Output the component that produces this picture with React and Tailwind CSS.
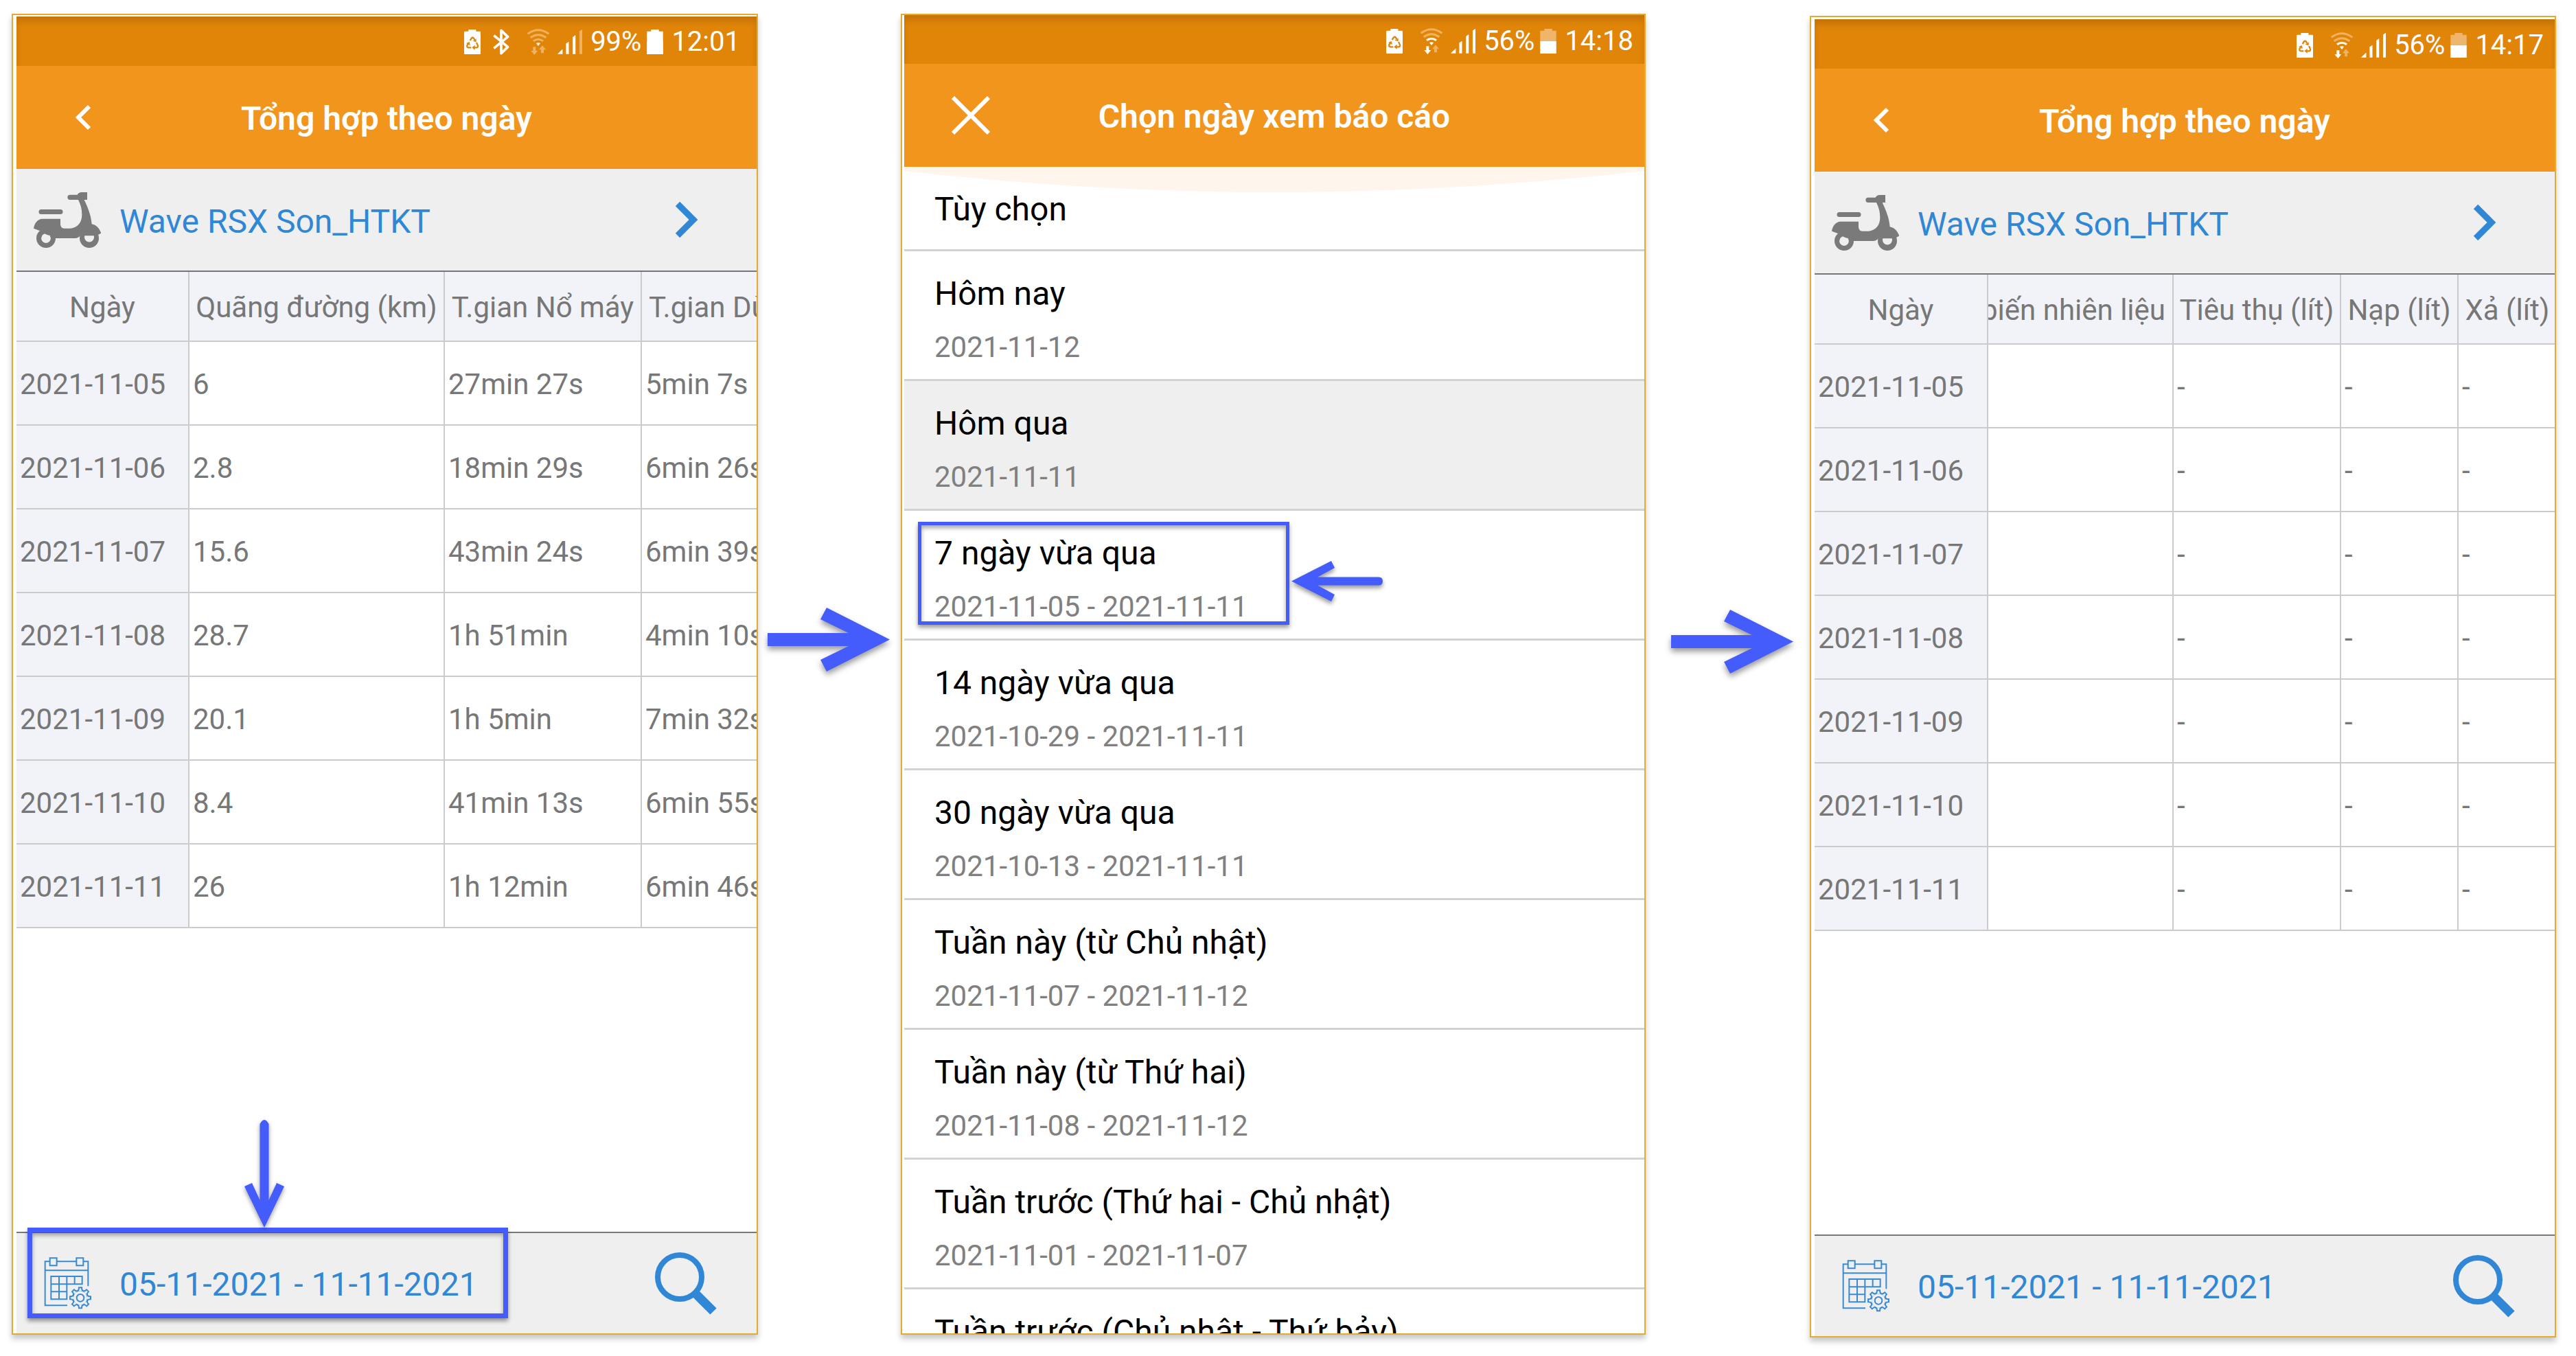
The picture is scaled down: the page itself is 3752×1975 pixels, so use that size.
import React from "react";

function BatterySaverIcon() {
  return (
    <svg className="h-9 w-6" viewBox="33 36 72 108" aria-hidden="true">
      <path fill="#fff" d="M52 36h33v8h16q4 0 4 4v92q0 4-4 4H37q-4 0-4-4V48q0-4 4-4h15z" />
      <path
        d="M59 84L66 73Q70 69 74 73L79 81M87 93L93 106Q95 114 87 115H77M64 115H52Q44 114 46 106L51 98"
        fill="none"
        stroke="#e18509"
        strokeWidth="7"
      />
      <path fill="#e18509" d="M86 76v15l-15-5zM80 104v21l-13-10zM42 96l14-6 4 15z" />
    </svg>
  );
}

function BluetoothIcon() {
  return (
    <svg className="h-[38px] w-6" viewBox="157 33 72 114" aria-hidden="true">
      <path
        d="M161 62L222 112L193 140V40L222 68L161 118"
        fill="none"
        stroke="#fff"
        strokeWidth="11"
        strokeLinejoin="round"
      />
    </svg>
  );
}

function WifiIcon({ strong }) {
  const dim = "#f0b25f";
  const lit = strong ? "#fff" : dim;
  return (
    <svg className="h-[38px] w-8" viewBox="304 32 96 114" aria-hidden="true">
      <g fill="none" strokeWidth="9">
        <path d="M306 54Q352 20 398 54" stroke={dim} />
        <path d="M318 70Q352 46 386 70" stroke={dim} />
        <path d="M331 85Q352 70 373 85" stroke={lit} />
      </g>
      <path d="M343 95q9-5 18 0l-9 12z" fill="#fff" />
      <path d="M329 111h12v17h9l-15 18-15-18h9z" fill={lit} />
      <path d="M364 138h12v-15h9l-15-18-15 18h9z" fill={dim} />
    </svg>
  );
}

function SignalIcon({ full }) {
  return (
    <svg className="h-9 w-9" viewBox="440 38 107 106" aria-hidden="true">
      <path fill="#fff" d="M440 144l22-22v22zM477 98l12-8v54h-12zM506 70l12-9v83h-12z" />
      <path fill={full ? "#fff" : "#f0b25f"} d="M535 45l12-8v107h-12z" />
    </svg>
  );
}

function BatteryIcon({ half }) {
  return (
    <svg className="h-9 w-6" viewBox="831 36 70 108" aria-hidden="true">
      <path fill={half ? "#efb56b" : "#fff"} d="M849 36h34v8h18v100h-70V44h18z" />
      <path fill="#fff" d="M831 90h70v54h-70z" />
    </svg>
  );
}

function ScooterIcon() {
  return (
    <svg className="h-[81px] w-[98px]" viewBox="27 39 294 243" fill="#7b7a7a" aria-hidden="true">
      <path d="M60 114h84a10 10 0 0 1 0 21H60a10 10 0 0 1 0-21z" />
      <path d="M186 50h32q6-11 18-11h25v33h-13c16 34 30 68 33 106c20 4 34 20 41 40l-12 6q-6-1-8 4H231c-4 7-12 12-24 12h-88q-4-18-22-26-24-10-44-7L27 197c3-22 18-42 38-42h79v25q2 17 16 17h28c30-4 50-24 50-60q0-34-16-65h-36a11 11 0 0 1 0-22z" />
      <circle cx="81" cy="240" r="31" fill="none" stroke="#7b7a7a" strokeWidth="22" />
      <circle cx="81" cy="240" r="20" fill="#efefef" />
      <circle cx="270" cy="240" r="42" />
      <path fill="#efefef" d="M250 229h40a21 21 0 1 1-40 0z" />
      <path d="M74 219h26l-4 9-12-4z" />
    </svg>
  );
}

function CalendarIcon() {
  const teeth = [0, 45, 90, 135, 180, 225, 270, 315];
  return (
    <svg className="h-[76px] w-[70px]" viewBox="26 31 210 228" fill="none" stroke="#3a8ad2" strokeWidth="6" aria-hidden="true">
      <path d="M52 50H31V242H128M83 50H167M199 50H219V158M31 89H219" />
      <path d="M52 35h30v33H52zM168 35h30v33h-30z" />
      <path d="M57 115H193V149H57zM57 149V215H126V115M92 115V215M160 115V149M57 182H126" />
      <circle cx="185" cy="209" r="16" strokeWidth="6" />
      <circle cx="185" cy="209" r="33" strokeWidth="6" />
      {teeth.map((a) => (
        <path key={a} transform={`rotate(${a} 185 209)`} fill="#efefef" strokeWidth="6" d="M173 179Q179 176 179 164H191Q191 176 197 179" />
      ))}
    </svg>
  );
}

function SearchIcon() {
  return (
    <svg className="h-[92px] w-[92px]" viewBox="0 0 92 92" fill="none" stroke="#2f87d6" aria-hidden="true">
      <circle cx="37" cy="37" r="32" strokeWidth="8" />
      <path d="M60 61L86 87" strokeWidth="13" />
    </svg>
  );
}

function StatusBar({ percent, time, bluetooth, half, className }) {
  return (
    <div className={`flex items-center justify-end bg-[#e18509] text-[40px] leading-[48px] text-white shadow-[inset_0_8px_8px_rgba(0,0,0,0.12)] ${className}`}>
      <BatterySaverIcon />
      {bluetooth && (
        <span className="ml-[18px]">
          <BluetoothIcon />
        </span>
      )}
      <span className="ml-[26px]">
        <WifiIcon strong={half} />
      </span>
      <span className="ml-3">
        <SignalIcon full={half} />
      </span>
      <span className="ml-3">{percent}</span>
      <span className="ml-2">
        <BatteryIcon half={half} />
      </span>
      <span className="ml-3">{time}</span>
    </div>
  );
}

function TitleBar({ title, close }) {
  return (
    <header className="grid h-[150px] grid-cols-[168px_1fr_168px] items-center bg-[#f2951d]">
      {close ? (
        <button type="button" aria-label="Đóng" className="ml-[69px] w-[56px]">
          <svg className="h-14 w-14" viewBox="0 0 56 56" aria-hidden="true">
            <path d="M2 2L54 54M54 2L2 54" stroke="#fff" strokeWidth="6" />
          </svg>
        </button>
      ) : (
        <button type="button" aria-label="Quay lại" className="ml-[85px] w-6">
          <svg className="h-[38px] w-6" viewBox="0 0 24 38" aria-hidden="true">
            <path d="M21 3L5 19L21 35" fill="none" stroke="#fff" strokeWidth="6" />
          </svg>
        </button>
      )}
      <h1 className="pt-1 text-center text-[48px] leading-[56px] font-semibold whitespace-nowrap text-white">{title}</h1>
    </header>
  );
}

const CELL = "overflow-hidden border-r-2 border-b-2 border-[#cbcbcd] whitespace-nowrap";

function ReportTable({ columns, rows, width }) {
  return (
    <div className="overflow-hidden">
      <table className={`table-fixed border-separate border-spacing-0 text-left text-[42px] leading-[48px] text-[#777] ${width}`}>
        <thead>
          <tr className="h-[102px] bg-[#f2f3f8]">
            {columns.map((c) => (
              <th key={c.label} scope="col" className={`${CELL} ${c.width} pt-1 font-normal`}>
                <div className={`flex ${c.align}`}>{c.label}</div>
              </th>
            ))}
          </tr>
        </thead>
        <tbody>
          {rows.map((row) => (
            <tr key={row[0]} className="h-[122px]">
              <th scope="row" className={`${CELL} bg-[#f2f3f8] pt-1 pl-[5px] font-normal`}>
                {row[0]}
              </th>
              {row.slice(1).map((v, i) => (
                <td key={i} className={`${CELL} pt-1 pl-[5px]`}>
                  {v}
                </td>
              ))}
            </tr>
          ))}
        </tbody>
      </table>
    </div>
  );
}

function DownArrow() {
  return (
    <svg className="absolute bottom-full left-[332px] mb-2 h-[157px] w-[58px] overflow-visible drop-shadow-[0_3px_3px_rgba(0,0,0,0.4)]" viewBox="0 0 58 157" aria-hidden="true">
      <path fill="#445cfb" d="M22.500 6Q29 -6 35.500 6V117L47 92L58 97L29 157L0 97L11 92L22.500 117z" />
    </svg>
  );
}

function ReportScreen({ status, table, marked }) {
  return (
    <div className="flex flex-1 flex-col">
      <StatusBar {...status} />
      <TitleBar title="Tổng hợp theo ngày" />
      <button type="button" className="flex h-[150px] items-center border-b-2 border-[#777] bg-[#efefef] pr-[85px] pl-[25px] text-left">
        <ScooterIcon />
        <span className="grow pt-[5px] pl-[27px] text-[48px] leading-[56px] text-[#2f87d6]">Wave RSX Son_HTKT</span>
        <svg className="h-[54px] w-[34px]" viewBox="0 0 34 54" aria-hidden="true">
          <path d="M4 4L27 27L4 50" fill="none" stroke="#2f87d6" strokeWidth="9" />
        </svg>
      </button>
      <ReportTable {...table} />
      <footer className="relative mt-auto flex h-[148px] items-center justify-between border-t-2 border-[#777] bg-[#efefef] pr-[57px] pl-10">
        <button type="button" className="flex items-center gap-10 text-[48px] leading-[56px] text-[#2f87d6]">
          <CalendarIcon />
          <span className="pt-1">05-11-2021 - 11-11-2021</span>
        </button>
        <button type="button" aria-label="Tìm kiếm">
          <SearchIcon />
        </button>
        {marked && (
          <>
            <span className="pointer-events-none absolute -top-2 bottom-[22px] left-4 w-[700px] border-[7px] border-[#445cfb] shadow-[0_4px_6px_rgba(0,0,0,0.4),inset_0_4px_6px_rgba(0,0,0,0.35)]" />
            <DownArrow />
          </>
        )}
      </footer>
    </div>
  );
}

const RANGES = [
  ["Tùy chọn", ""],
  ["Hôm nay", "2021-11-12"],
  ["Hôm qua", "2021-11-11"],
  ["7 ngày vừa qua", "2021-11-05 - 2021-11-11"],
  ["14 ngày vừa qua", "2021-10-29 - 2021-11-11"],
  ["30 ngày vừa qua", "2021-10-13 - 2021-11-11"],
  ["Tuần này (từ Chủ nhật)", "2021-11-07 - 2021-11-12"],
  ["Tuần này (từ Thứ hai)", "2021-11-08 - 2021-11-12"],
  ["Tuần trước (Thứ hai - Chủ nhật)", "2021-11-01 - 2021-11-07"],
  ["Tuần trước (Chủ nhật - Thứ bảy)", "2021-10-31 - 2021-11-06"],
];

function RangeItem({ title, range, selected, marked }) {
  return (
    <li className={`relative border-b-[3px] border-[#d2d2d2] ${selected ? "bg-[#efefef]" : ""}`}>
      <button type="button" className={`block w-full pt-[34px] pl-11 text-left ${range ? "pb-[22px]" : "pb-[30px]"}`}>
        <span className="block text-[48px] leading-[56px] text-black">{title}</span>
        {range && <span className="mt-[26px] block text-[42px] leading-[48px] text-[#808080]">{range}</span>}
      </button>
      {marked && (
        <>
          <span className="pointer-events-none absolute top-4 bottom-5 left-5 w-[541px] border-[5px] border-[#445cfb] shadow-[0_4px_6px_rgba(0,0,0,0.4),inset_0_4px_6px_rgba(0,0,0,0.35)]" />
          <svg className="absolute top-[73px] left-[564px] h-[59px] w-[133px] overflow-visible drop-shadow-[0_4px_3px_rgba(0,0,0,0.4)]" viewBox="0 0 133 59" aria-hidden="true">
            <path fill="#445cfb" d="M0 29.500L58 0L63 10L38 23.500H127Q133 23.500 133 29.500T127 35.500H38L63 49L58 59z" />
          </svg>
        </>
      )}
    </li>
  );
}

function PickerScreen() {
  return (
    <div className="flex flex-1 flex-col">
      <StatusBar percent="56%" time="14:18" half className="h-[71px] pr-4 pt-1" />
      <TitleBar title="Chọn ngày xem báo cáo" close />
      <div className="relative min-h-0 flex-1">
        <svg className="absolute top-0 left-0 h-[37px] w-full" viewBox="0 0 1080 37" preserveAspectRatio="none" aria-hidden="true">
          <path fill="#fef6ed" d="M0 0H1080V6A4719 4719 0 0 1 0 6z" />
        </svg>
        <ul className="relative">
          {RANGES.map(([title, range], i) => (
            <RangeItem key={title} title={title} range={range} selected={i === 2} marked={i === 3} />
          ))}
        </ul>
      </div>
    </div>
  );
}

function Phone({ children, className }) {
  return (
    <section className={`flex min-w-0 flex-1 flex-col overflow-hidden border-2 border-[#e5ab2e] bg-white shadow-[0_6px_8px_rgba(0,0,0,0.22)] ${className}`}>
      {children}
    </section>
  );
}

function StepArrow({ className }) {
  return (
    <div className={className}>
      <svg className="h-[93px] w-[178px] overflow-visible drop-shadow-[0_5px_4px_rgba(0,0,0,0.4)]" viewBox="0 0 178 93" aria-hidden="true">
        <path fill="#445cfb" d="M0 37H118L77 17L86 0L178 46.500L86 93L77 76L118 56H0z" />
      </svg>
    </div>
  );
}

const TRIPS = {
  width: "w-[1172px]",
  columns: [
    { label: "Ngày", width: "w-[252px]", align: "justify-center" },
    { label: "Quãng đường (km)", width: "w-[372px]", align: "justify-center" },
    { label: "T.gian Nổ máy", width: "w-[287px]", align: "justify-center" },
    { label: "T.gian Dừng", width: "w-[261px]", align: "justify-start pl-[10px]" },
  ],
  rows: [
    ["2021-11-05", "6", "27min 27s", "5min 7s"],
    ["2021-11-06", "2.8", "18min 29s", "6min 26s"],
    ["2021-11-07", "15.6", "43min 24s", "6min 39s"],
    ["2021-11-08", "28.7", "1h 51min", "4min 10s"],
    ["2021-11-09", "20.1", "1h 5min", "7min 32s"],
    ["2021-11-10", "8.4", "41min 13s", "6min 55s"],
    ["2021-11-11", "26", "1h 12min", "6min 46s"],
  ],
};

const FUEL = {
  width: "w-[1082px]",
  columns: [
    { label: "Ngày", width: "w-[253px]", align: "justify-center" },
    { label: "biến nhiên liệu", width: "w-[270px]", align: "justify-end pr-[10px]" },
    { label: "Tiêu thụ (lít)", width: "w-[244px]", align: "justify-center" },
    { label: "Nạp (lít)", width: "w-[171px]", align: "justify-center" },
    { label: "Xả (lít)", width: "w-[144px]", align: "justify-center" },
  ],
  rows: TRIPS.rows.map(([day]) => [day, "", "-", "-", "-"]),
};

export default function App() {
  return (
    <main className="flex h-screen bg-white pt-5 pr-[29px] pb-[27px] pl-[17px] font-['Roboto',sans-serif]">
      <Phone className="mb-1 pt-[2px] pl-[5px]">
        <ReportScreen status={{ percent: "99%", time: "12:01", bluetooth: true, className: "h-[72px] pr-6 pt-[2px]" }} table={TRIPS} marked />
      </Phone>
      <StepArrow className="w-[208px] pt-[865px] pl-[14px]" />
      <Phone className="mb-1 pl-[3px]">
        <PickerScreen />
      </Phone>
      <StepArrow className="w-[239px] pt-[868px] pl-[37px]" />
      <Phone className="mt-[3px] pt-[3px] pl-[5px]">
        <ReportScreen status={{ percent: "56%", time: "14:17", half: true, className: "h-[72px] pr-4 pt-[3px]" }} table={FUEL} />
      </Phone>
    </main>
  );
}
